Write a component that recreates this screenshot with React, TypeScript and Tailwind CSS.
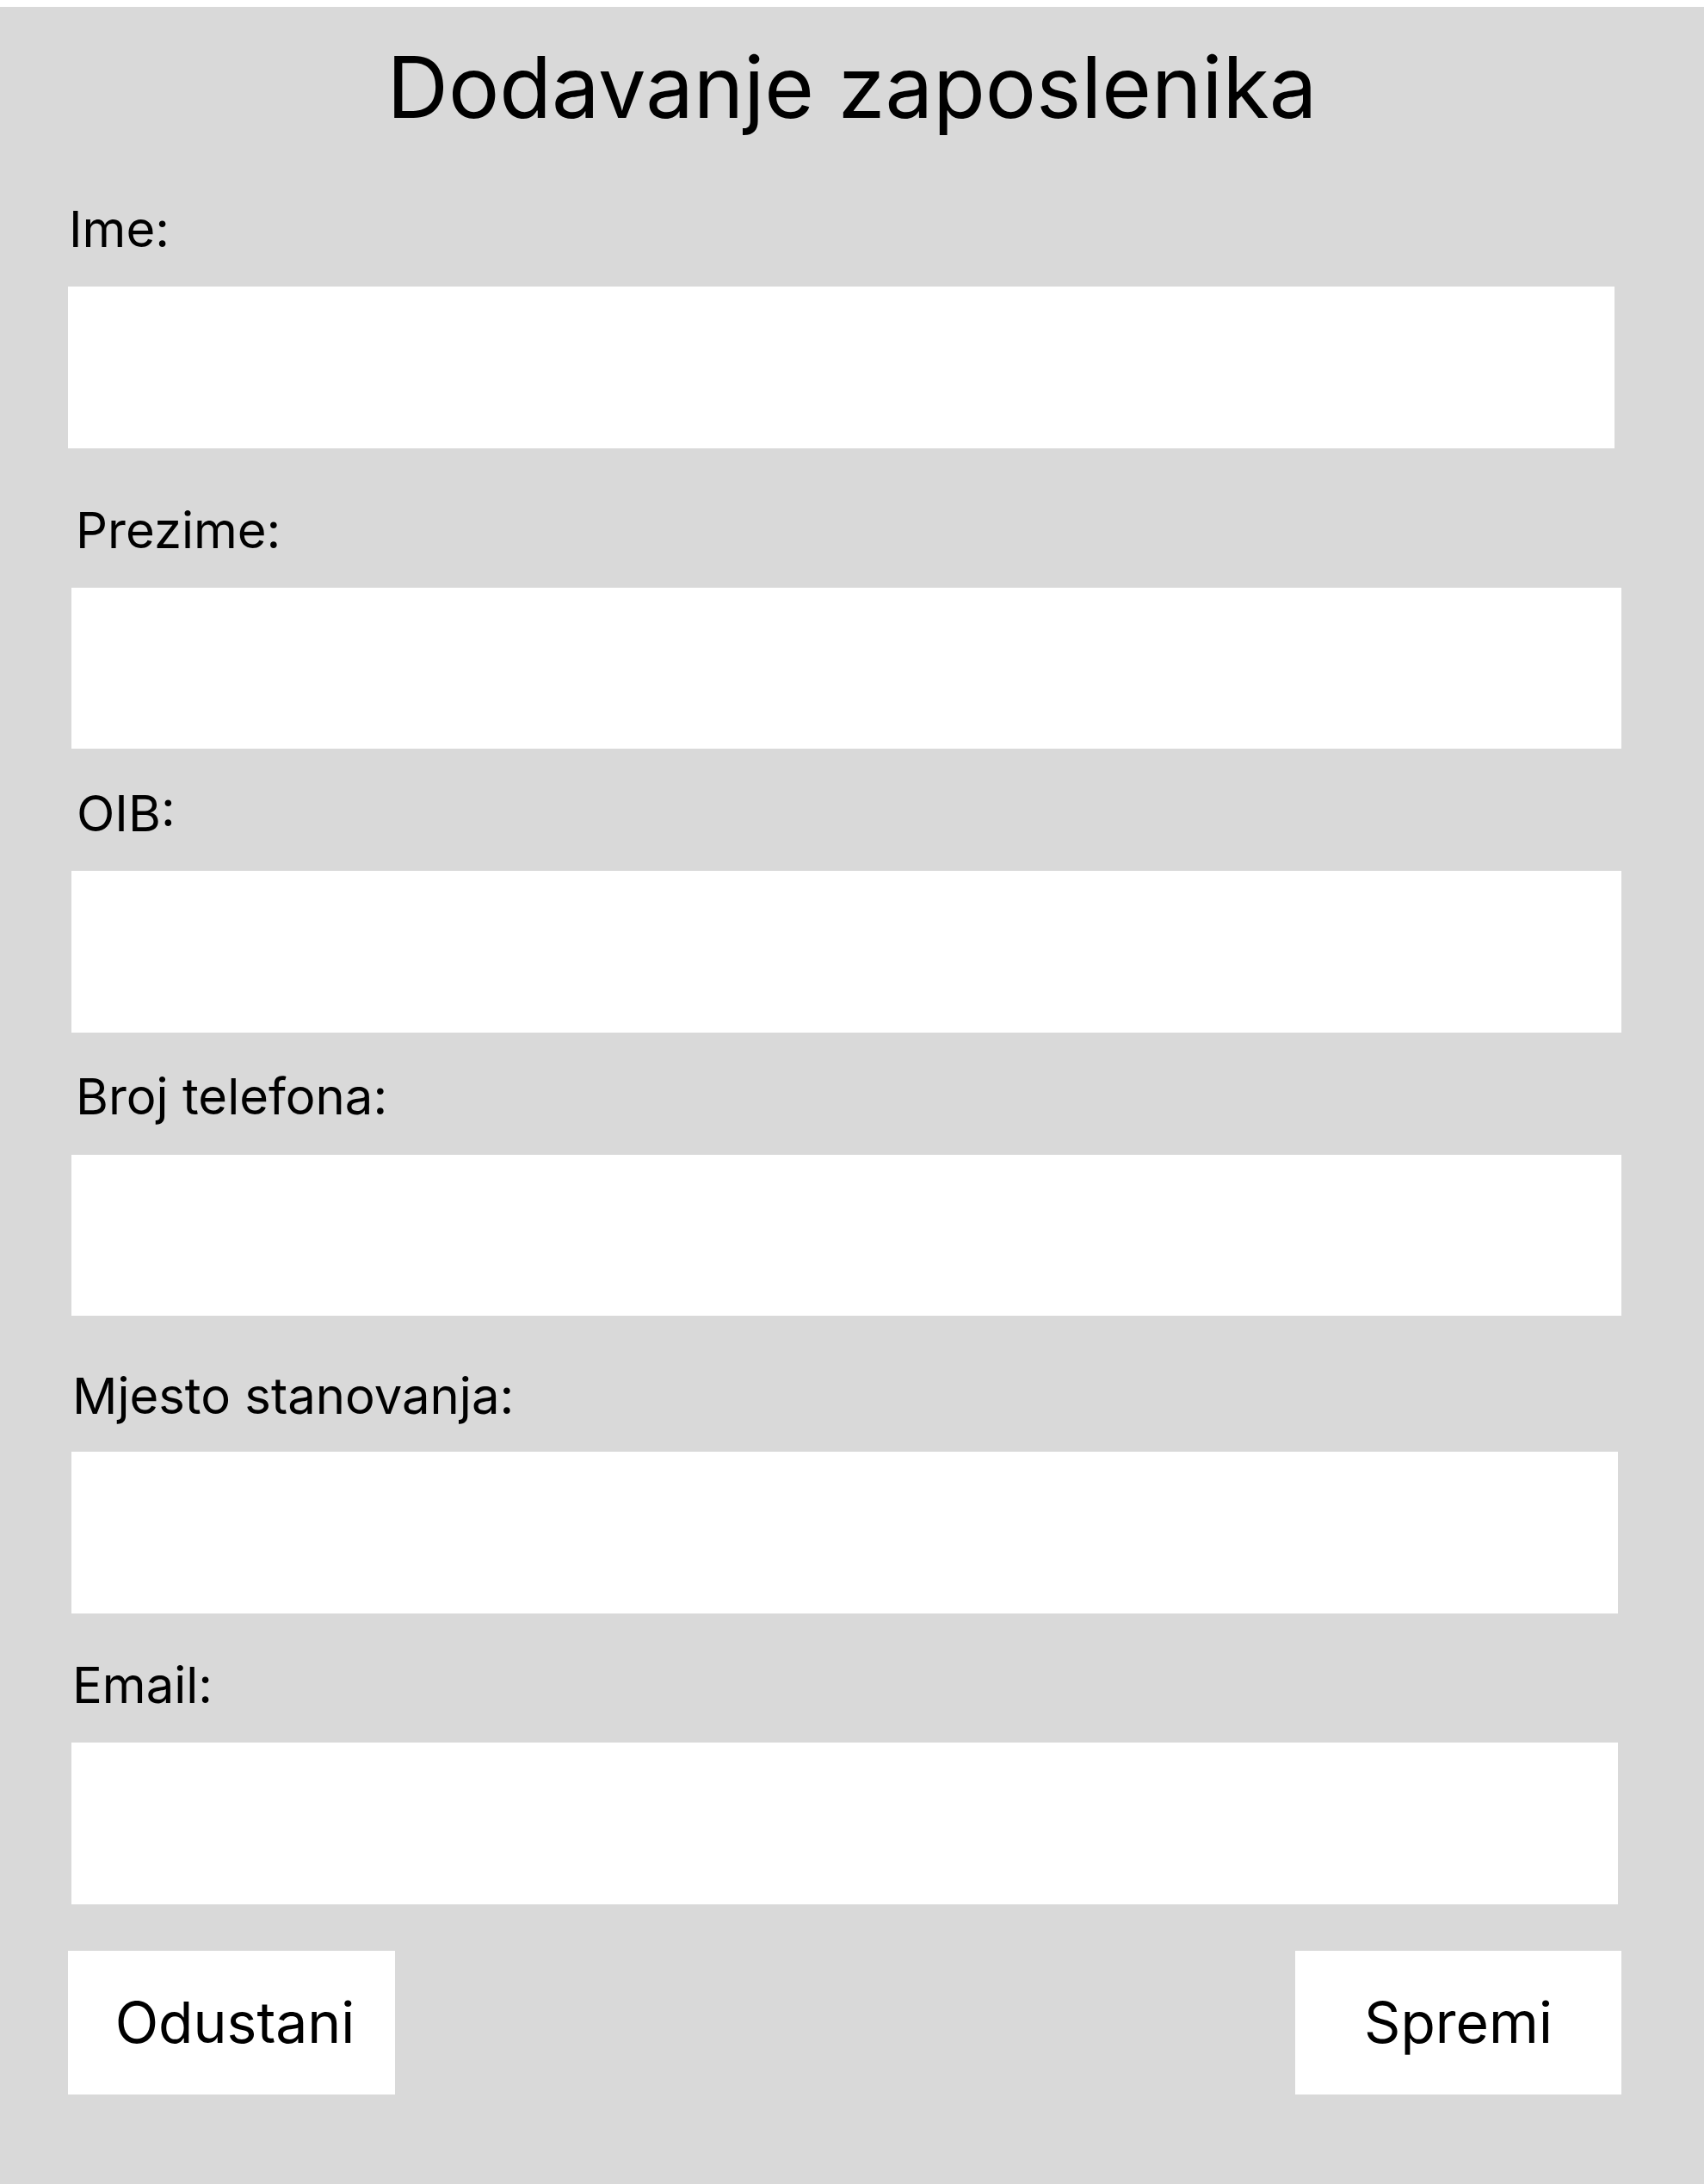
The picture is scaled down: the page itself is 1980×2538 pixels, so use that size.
import React from 'react';

type Field = {
  label: string;
  labelClass: string;
  inputClass: string;
};

const fields: Field[] = [
  { label: 'Ime:', labelClass: 'mt-[85px] ml-[80px]', inputClass: 'mt-[37px] ml-[79px] w-[1797px] h-[188px]' },
  { label: 'Prezime:', labelClass: 'mt-[65px] ml-[88px]', inputClass: 'mt-[37px] ml-[83px] w-[1801px] h-[187px]' },
  { label: 'OIB:', labelClass: 'mt-[45px] ml-[89px]', inputClass: 'mt-[37px] ml-[83px] w-[1801px] h-[188px]' },
  { label: 'Broj telefona:', labelClass: 'mt-[44px] ml-[88px]', inputClass: 'mt-[38px] ml-[83px] w-[1801px] h-[187px]' },
  { label: 'Mjesto stanovanja:', labelClass: 'mt-[63px] ml-[84px]', inputClass: 'mt-[35px] ml-[83px] w-[1797px] h-[188px]' },
  { label: 'Email:', labelClass: 'mt-[53px] ml-[84px]', inputClass: 'mt-[37px] ml-[83px] w-[1797px] h-[188px]' },
];

const App: React.FC = () => {
  return (
    <div className="bg-white pt-2 font-['Inter',sans-serif] text-black">
      <div className="bg-[#d9d9d9] min-h-[2530px] pt-[43px] flex flex-col items-start">
        <h1 className="self-stretch text-center text-[99px] leading-[100px] font-normal">
          Dodavanje zaposlenika
        </h1>

        {fields.map((f) => (
          <React.Fragment key={f.label}>
            <label className={`block text-[58px] leading-[60px] ${f.labelClass}`}>{f.label}</label>
            <input type="text" className={`block bg-white outline-none px-6 text-[48px] ${f.inputClass}`} />
          </React.Fragment>
        ))}

        <div className="self-stretch mt-[54px] pl-[79px] pr-[96px] flex flex-row justify-between">
          <button className="w-[380px] h-[167px] bg-white pl-[8px] text-[66px] flex items-center justify-center">
            Odustani
          </button>
          <button className="w-[379px] h-[167px] bg-white text-[66px] flex items-center justify-center">
            Spremi
          </button>
        </div>
      </div>
    </div>
  );
};

export default App;
